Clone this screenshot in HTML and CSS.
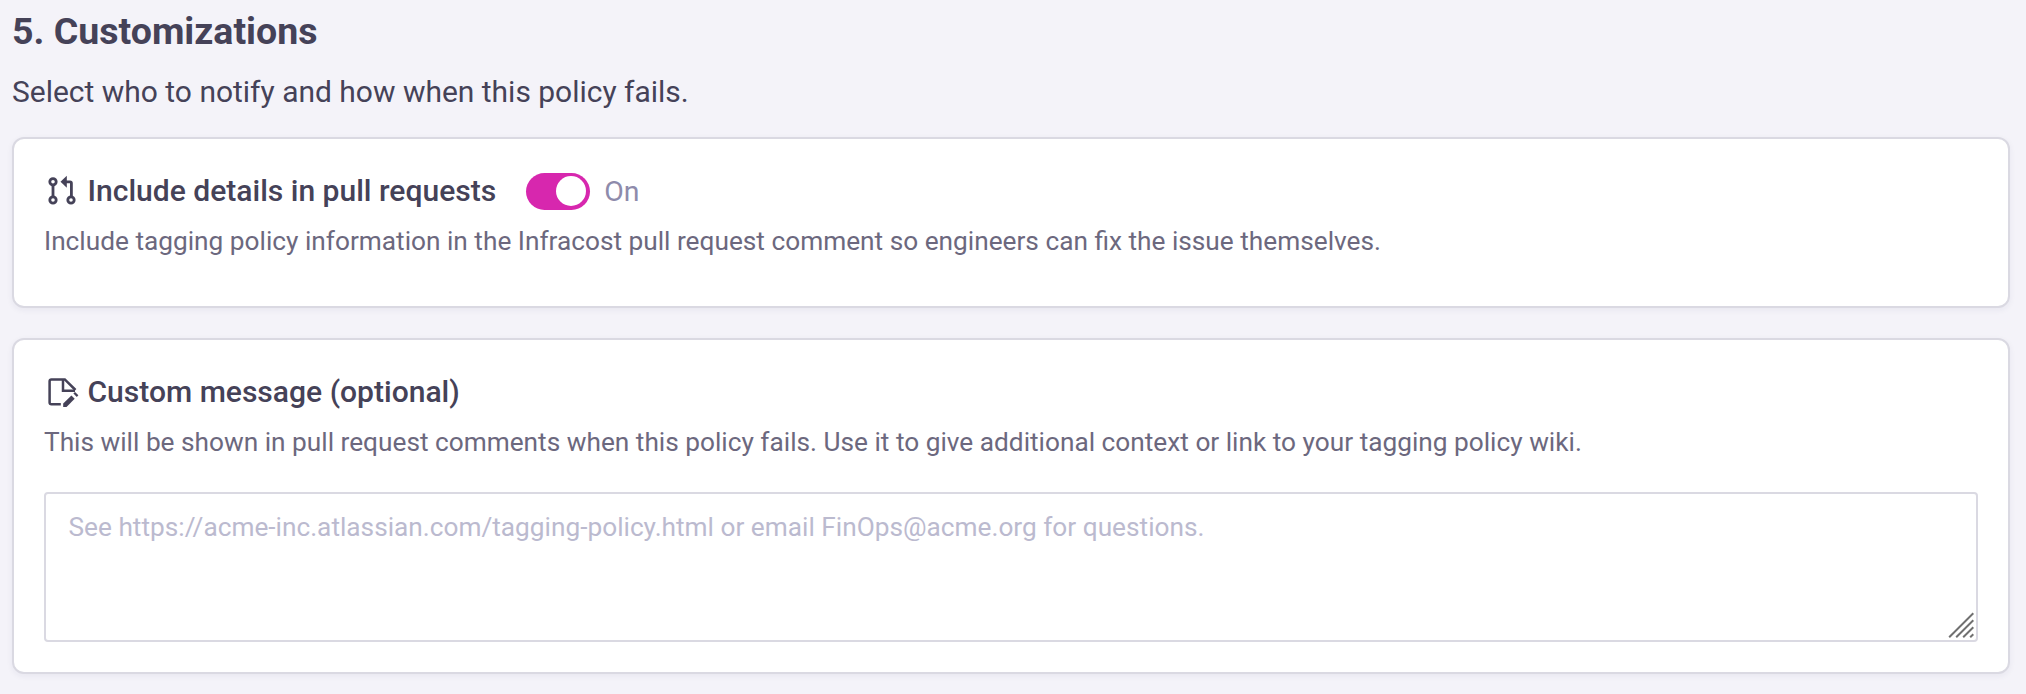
FILE: index.html
```html
<!DOCTYPE html>
<html lang="en">
<head>
<meta charset="utf-8">
<title>Customizations</title>
<link rel="stylesheet" href="styles.css">
</head>
<body>
<main class="section">
  <h2 class="section-title"><span>5. Customizations</span></h2>
  <p class="section-intro"><span>Select who to notify and how when this policy fails.</span></p>

  <section class="card card-details">
    <div class="card-head">
      <svg class="icon" viewBox="0 0 32 32" fill="none" stroke="currentColor" stroke-width="2.8">
        <circle cx="7" cy="6.8" r="3.2"/>
        <circle cx="7" cy="25" r="3.2"/>
        <circle cx="25" cy="25" r="3.2"/>
        <path d="M7 10v12M20 6.8h4q1.4 0 1.4 1.4V22"/>
        <path d="M14.5 6.8L20.8.8v12z" fill="currentColor" stroke="none"/>
      </svg>
      <h3 class="card-title">Include details in pull requests</h3>
      <span class="switch"><span class="knob"></span></span>
      <span class="switch-label">On</span>
    </div>
    <p class="card-text">Include tagging policy information in the Infracost pull request comment so engineers can fix the issue themselves.</p>
  </section>

  <section class="card card-message">
    <div class="card-head">
      <svg class="icon" viewBox="0 0 32 32" fill="none" stroke="currentColor" stroke-width="2.5">
        <path d="M14.8 28.2H5.4q-1.8 0-1.8-1.8V5.2q0-1.8 1.8-1.8h13.4L29.5 14"/>
        <path d="M17 3.4v11.4h12"/>
        <path d="M17.2 31v-3.4l8.2-8.2 3.3 3.3-8.2 8.3z" fill="currentColor" stroke="none"/>
        <path d="M27.4 17.5l1.6-1.6 3.4 3.4-1.6 1.6z" fill="currentColor" stroke="none"/>
      </svg>
      <h3 class="card-title">Custom message (optional)</h3>
    </div>
    <p class="card-text">This will be shown in pull request comments when this policy fails. Use it to give additional context or link to your tagging policy wiki.</p>
    <div class="message-box">
      <textarea class="message" placeholder="See https://acme-inc.atlassian.com/tagging-policy.html or email FinOps@acme.org for questions."></textarea>
      <svg class="grip" viewBox="0 0 26 26" stroke="#707070" stroke-width="2">
        <path d="M1.2 25.3L25.3 1.2M8.2 25.3L25.3 8.2M15.2 25.3l10.1-10.1M22.2 25.3l3.1-3.1"/>
      </svg>
    </div>
  </section>
</main>
</body>
</html>
```
FILE: styles.css
```css
* {
  box-sizing: border-box;
}

body {
  margin: 0;
  height: 694px;
  overflow: hidden;
  background: #f4f3f9;
  color: #454258;
  font-family: Roboto, sans-serif;
}

h2, h3, p {
  margin: 0;
  white-space: nowrap;
}

.section {
  padding: 8px 16px 0 12px;
}

.section-title {
  height: 46px;
  font-size: 37.5px;
  font-weight: 700;
  line-height: 46px;
}

.section-intro {
  height: 83px;
  padding-top: 16px;
  font-size: 29.98px;
  line-height: 44px;
}

.card {
  padding: 0 30px;
  border: 2px solid #dad9e2;
  border-radius: 12px;
  background: #fff;
  box-shadow: 0 2px 6px rgba(40, 35, 80, 0.06);
}

.card-details {
  height: 171px;
  padding-top: 31px;
  margin-bottom: 30px;
}

.card-message {
  height: 336px;
  padding-top: 31px;
}

.card-head {
  display: flex;
  align-items: center;
  height: 42px;
}

.icon {
  width: 32px;
  height: 32px;
  margin: 0 9.5px 0 2px;
  overflow: visible;
}

.card-title {
  font-size: 30.05px;
  font-weight: 500;
  line-height: 42px;
}

.switch {
  display: flex;
  justify-content: flex-end;
  width: 64px;
  height: 37px;
  margin-left: 30px;
  padding: 3px 4px;
  border-radius: 19px;
  background: #d727ae;
}

.knob {
  width: 30px;
  height: 30px;
  border-radius: 50%;
  background: #fff;
}

.switch-label {
  margin-left: 14px;
  color: #8e8bab;
  font-size: 28.4px;
}

.card-text {
  padding-top: 11px;
  color: #6c687e;
  font-size: 26.24px;
  line-height: 36px;
}

.message-box {
  position: relative;
  height: 150px;
  margin-top: 32px;
}

.message {
  display: block;
  width: 100%;
  height: 150px;
  margin: 0;
  padding: 13px 22.5px;
  border: 2px solid #dad9e2;
  border-radius: 4px;
  outline: 0;
  resize: none;
  background: #fff;
  font: 26.24px/40px Roboto, sans-serif;
}

.message::placeholder {
  color: #bbbacf;
}

.grip {
  position: absolute;
  right: 4px;
  bottom: 4px;
  width: 26px;
  height: 26px;
}
```
